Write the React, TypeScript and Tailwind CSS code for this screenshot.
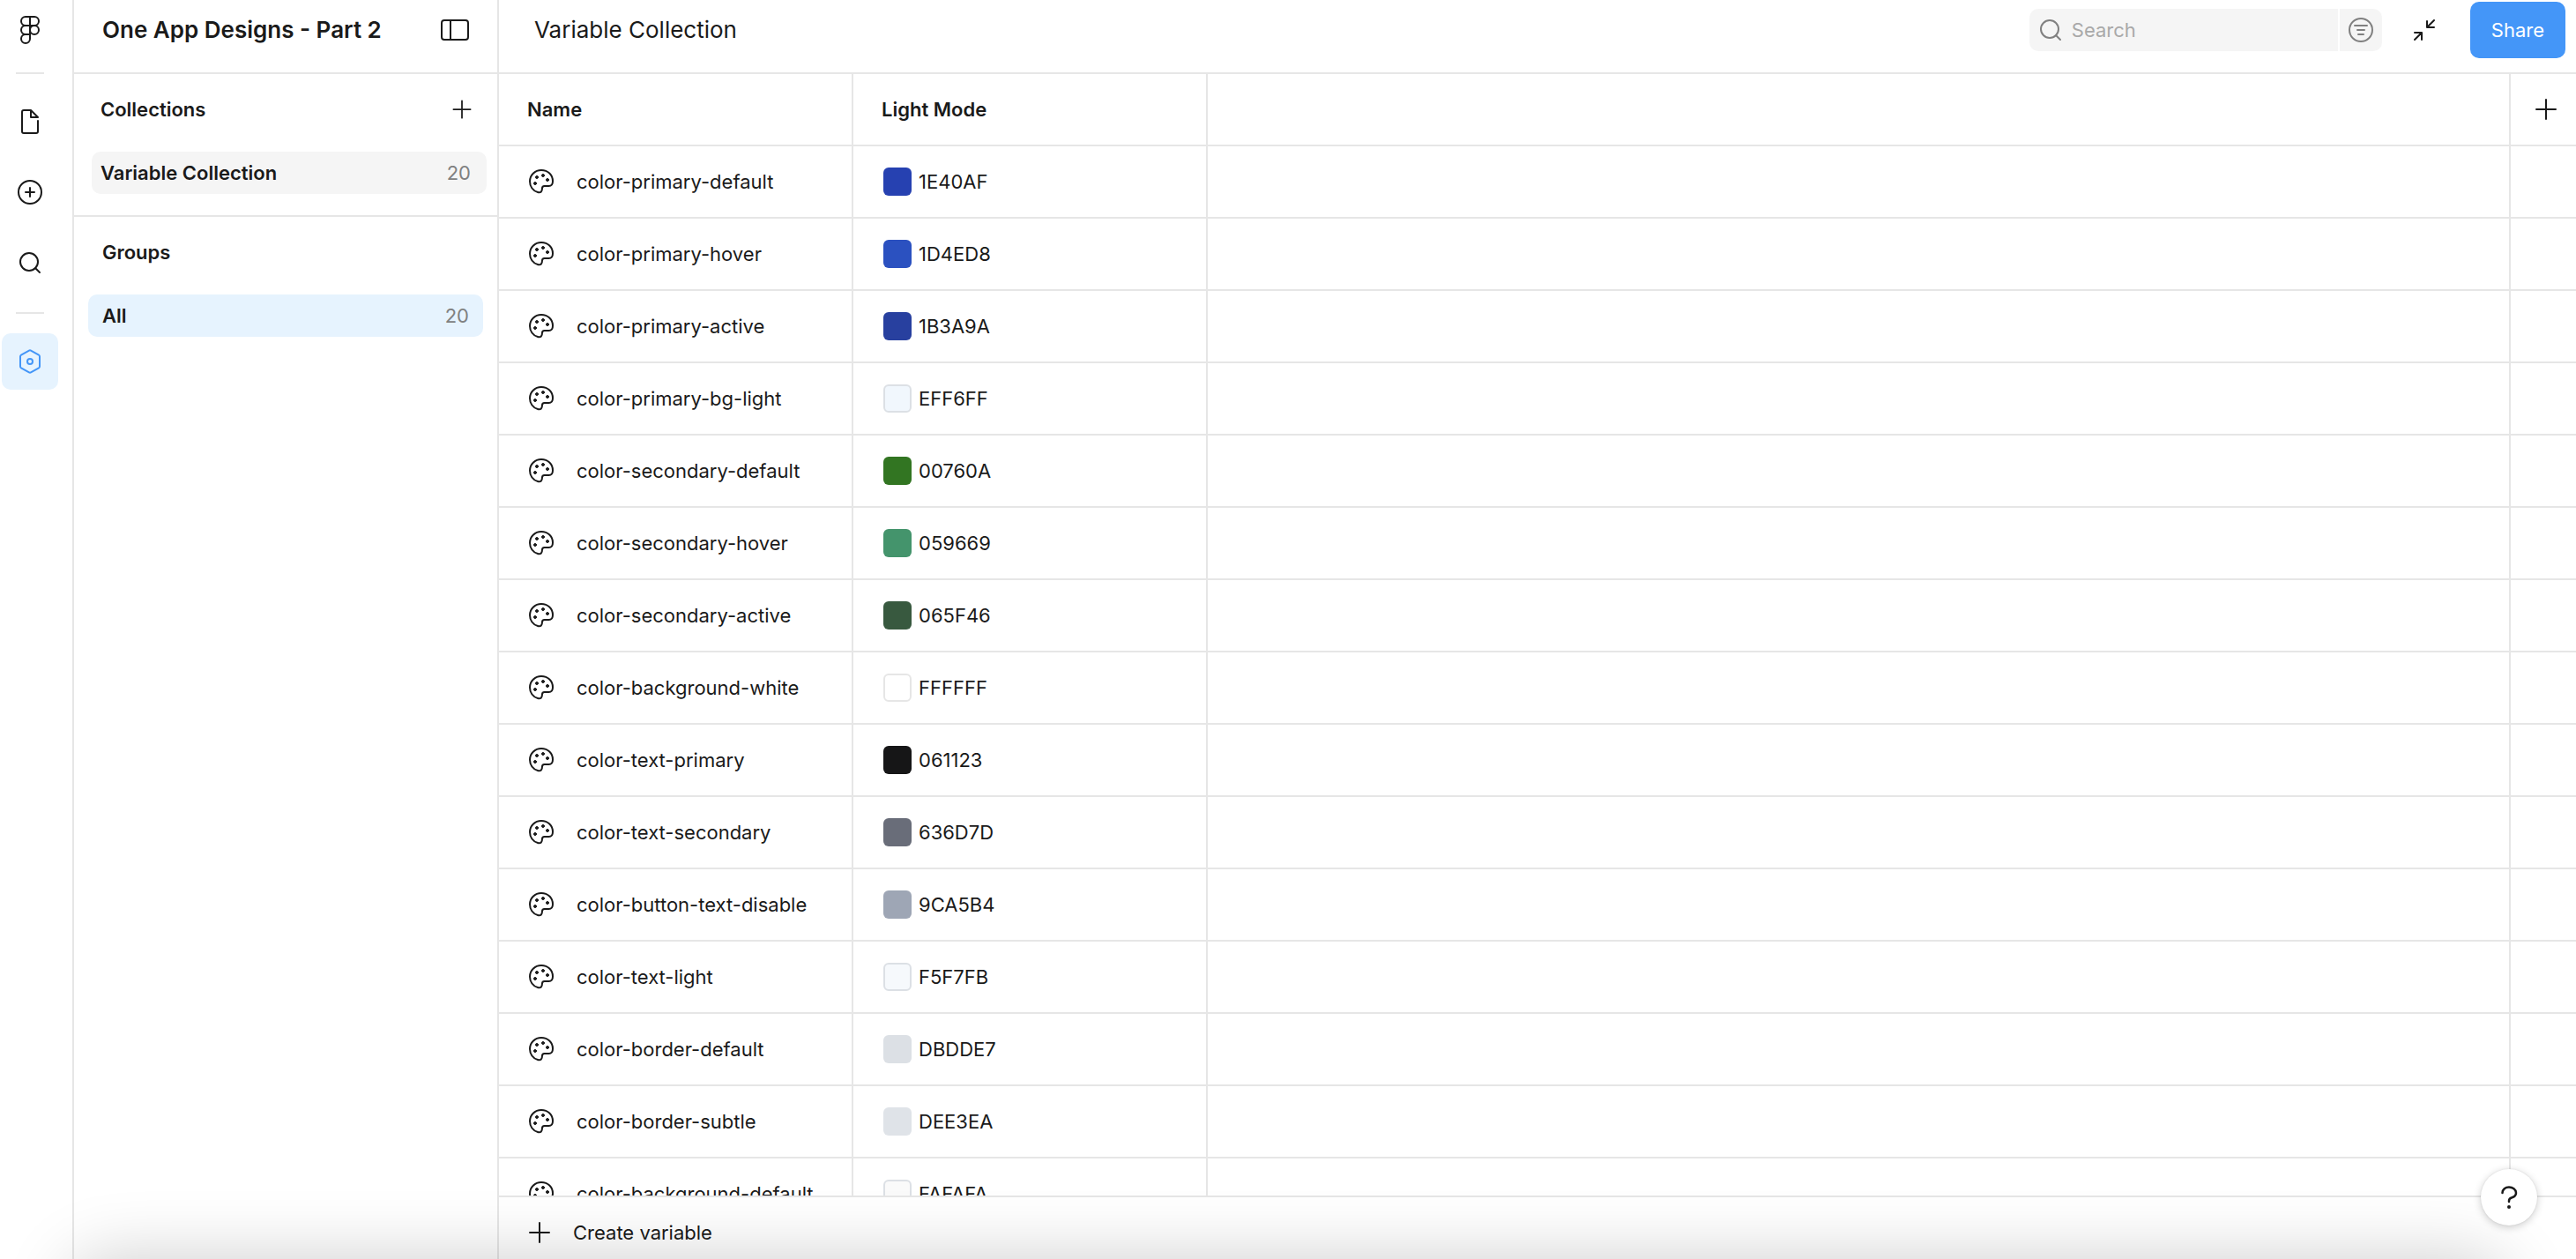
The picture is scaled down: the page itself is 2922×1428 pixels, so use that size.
import type { ReactNode } from "react";
import clsx from "clsx";

type IconProps = { className?: string };

const variables = [
  { name: "color-primary-default", hex: "1E40AF", swatch: "bg-[#2641b1]" },
  { name: "color-primary-hover", hex: "1D4ED8", swatch: "bg-[#2b51c0]" },
  { name: "color-primary-active", hex: "1B3A9A", swatch: "bg-[#28409f]" },
  { name: "color-primary-bg-light", hex: "EFF6FF", swatch: "border-2 border-[#dce0e5] bg-[#f1f7fd]" },
  { name: "color-secondary-default", hex: "00760A", swatch: "bg-[#327522]" },
  { name: "color-secondary-hover", hex: "059669", swatch: "bg-[#44946c]" },
  { name: "color-secondary-active", hex: "065F46", swatch: "bg-[#38593f]" },
  { name: "color-background-white", hex: "FFFFFF", swatch: "border-2 border-[#e6e6e6] bg-white" },
  { name: "color-text-primary", hex: "061123", swatch: "bg-[#161617]" },
  { name: "color-text-secondary", hex: "636D7D", swatch: "bg-[#696d79]" },
  { name: "color-button-text-disable", hex: "9CA5B4", swatch: "bg-[#9ea6b5]" },
  { name: "color-text-light", hex: "F5F7FB", swatch: "border-2 border-[#dce0e5] bg-[#f6f9fc]" },
  { name: "color-border-default", hex: "DBDDE7", swatch: "bg-[#dce0e5]" },
  { name: "color-border-subtle", hex: "DEE3EA", swatch: "bg-[#dfe3e8]" },
  { name: "color-background-default", hex: "FAFAFA", swatch: "border-2 border-[#dce0e5] bg-[#fafafa]" },
];

function Icon({ className = "size-8", children }: IconProps & { children: ReactNode }) {
  return (
    <svg
      viewBox="0 0 32 32"
      fill="none"
      stroke="currentColor"
      strokeWidth="2"
      strokeLinecap="round"
      strokeLinejoin="round"
      aria-hidden="true"
      className={clsx("shrink-0", className)}
    >
      {children}
    </svg>
  );
}

function FigmaIcon() {
  return (
    <Icon>
      <path d="M16 1h-5a5 5 0 0 0 0 10h5zM16 1h5a5 5 0 0 1 0 10h-5zM16 11h-5a5 5 0 0 0 0 10h5z" />
      <circle cx="21" cy="16" r="5" />
      <path d="M16 21h-5a5 5 0 1 0 5 5z" />
    </Icon>
  );
}

function FileIcon() {
  return (
    <Icon>
      <path d="M25 15v12a2 2 0 0 1-2 2H9a2 2 0 0 1-2-2V5a2 2 0 0 1 2-2h8l8 8h-8V3" />
    </Icon>
  );
}

function PlusCircleIcon() {
  return (
    <Icon>
      <circle cx="16" cy="16" r="13" />
      <path d="M16 11v10M11 16h10" />
    </Icon>
  );
}

function SearchIcon() {
  return (
    <Icon>
      <circle cx="15" cy="15" r="10" />
      <path d="m22 22 5 5" />
    </Icon>
  );
}

function VariablesIcon() {
  return (
    <Icon>
      <path d="M15 3.600a2 2 0 0 1 2 0l9 5a2 2 0 0 1 1 1.800v11.200a2 2 0 0 1-1 1.800l-9 5a2 2 0 0 1-2 0l-9-5a2 2 0 0 1-1-1.800V10.400a2 2 0 0 1 1-1.800z" />
      <circle cx="16" cy="16" r="3" />
    </Icon>
  );
}

function PanelIcon() {
  return (
    <Icon>
      <rect x="1" y="5" width="30" height="22" rx="3" />
      <path d="M11 5v22" />
    </Icon>
  );
}

function PlusIcon({ className }: IconProps) {
  return (
    <Icon className={className}>
      <path d="M16 5v22M5 16h22" />
    </Icon>
  );
}

function FilterIcon() {
  return (
    <Icon>
      <circle cx="16" cy="16" r="13" />
      <path d="M9 11h14M12 16h8M13 21h6" />
    </Icon>
  );
}

function CollapseIcon() {
  return (
    <Icon>
      <path d="M27 5l-8 8M19 6v7h8M5 27l8-8M5 19h8v8" />
    </Icon>
  );
}

function PaletteIcon() {
  return (
    <Icon>
      <path d="M12 28C6.500 26.500 3 21.500 3 15.700 3 8.600 8.700 3 16 3c7.400 0 13 5.200 13 12.500 0 3.500-1.700 5.500-4.500 5.500h-5c-1.700 0-2.500.8-2.500 2.500 0 3.500-1.500 5.500-5 4.500z" />
      <g fill="currentColor" strokeWidth="1">
        <circle cx="9" cy="18" r="1.500" />
        <circle cx="11" cy="11" r="1.500" />
        <circle cx="18" cy="9" r="1.500" />
        <circle cx="23" cy="14" r="1.500" />
      </g>
    </Icon>
  );
}

function HelpIcon() {
  return (
    <Icon>
      <path
        d="M8.500 11C8.500 7 12 4.500 16 4.500s8 2.500 8 6.500c0 3-2 4.500-4.500 5.200-2.300.6-3.500 1.800-3.500 3.800v1"
        strokeWidth="2.500"
      />
      <circle cx="16" cy="27" r="2" fill="currentColor" stroke="none" />
    </Icon>
  );
}

function RailButton({ label, active, children }: { label: string; active?: boolean; children: ReactNode }) {
  return (
    <button
      type="button"
      aria-label={label}
      className={clsx(
        "flex size-16 items-center justify-center rounded-[10px]",
        active && "bg-[#e6f3fe] text-[#4496f8]",
      )}
    >
      {children}
    </button>
  );
}

function Rail() {
  return (
    <nav className="flex w-[84px] shrink-0 flex-col items-center border-r-2 border-[#e6e6e6] pt-0.5 pr-4 pl-0.5">
      <RailButton label="Main menu">
        <FigmaIcon />
      </RailButton>
      <div className="mt-4 mb-[22px] h-0.5 w-8 bg-[#e6e6e6]" />
      <div className="flex flex-col gap-4">
        <RailButton label="File">
          <FileIcon />
        </RailButton>
        <RailButton label="Assets">
          <PlusCircleIcon />
        </RailButton>
        <RailButton label="Find">
          <SearchIcon />
        </RailButton>
      </div>
      <div className="mt-6 mb-[22px] h-0.5 w-8 bg-[#e6e6e6]" />
      <RailButton label="Variables" active>
        <VariablesIcon />
      </RailButton>
    </nav>
  );
}

function Sidebar() {
  return (
    <aside className="flex w-[482px] shrink-0 flex-col border-r-2 border-[#e6e6e6]">
      <div className="flex h-[84px] items-start justify-between border-b-2 border-[#e6e6e6] pt-0.5 pr-8 pl-8">
        <h1 className="text-[26px] leading-[64px] font-semibold">One App Designs - Part 2</h1>
        <button type="button" aria-label="Toggle sidebar" className="flex h-16 items-center">
          <PanelIcon />
        </button>
      </div>

      <section className="h-[162px] border-b-2 border-[#e6e6e6] px-2.5">
        <div className="flex h-20 items-center justify-between pr-4 pl-5">
          <h2 className="font-semibold">Collections</h2>
          <button type="button" aria-label="Create collection">
            <PlusIcon className="size-7" />
          </button>
        </div>
        <button
          type="button"
          className="mt-2 ml-2.5 flex h-12 w-[448px] items-center justify-between rounded-[10px] bg-[#f5f5f5] pr-[18px] pl-2.5"
        >
          <span className="font-semibold">Variable Collection</span>
          <span className="text-[#808080]">20</span>
        </button>
      </section>

      <section className="px-4">
        <h2 className="flex h-20 items-center pl-4 font-semibold">Groups</h2>
        <button
          type="button"
          className="mt-2 flex h-12 w-full items-center justify-between rounded-[10px] bg-[#e6f3fe] px-4"
        >
          <span className="font-semibold">All</span>
          <span className="text-[#808080]">20</span>
        </button>
      </section>
    </aside>
  );
}

function Toolbar() {
  return (
    <header className="flex h-[84px] shrink-0 items-start border-b-2 border-[#e6e6e6] pt-0.5 pr-3 pl-10">
      <h2 className="text-[26px] leading-[64px]">Variable Collection</h2>
      <div className="ml-auto flex h-16 items-center">
        <div className="flex h-12 w-[400px] gap-0.5">
          <label className="flex flex-1 items-center gap-2 rounded-l-[10px] bg-[#f5f5f5] pl-2 text-[#808080]">
            <SearchIcon />
            <input
              type="search"
              placeholder="Search"
              aria-label="Search variables"
              className="w-full min-w-0 outline-none placeholder:text-[#a9a9a9]"
            />
          </label>
          <button
            type="button"
            aria-label="Filter"
            className="flex w-12 items-center justify-center rounded-r-[10px] bg-[#f5f5f5] text-[#808080]"
          >
            <FilterIcon />
          </button>
        </div>
        <button type="button" aria-label="Collapse window" className="ml-4 flex size-16 items-center justify-center">
          <CollapseIcon />
        </button>
        <button type="button" className="ml-5 h-16 rounded-[10px] bg-[#4496f8] px-6 text-white">
          Share
        </button>
      </div>
    </header>
  );
}

function VariableTable() {
  return (
    <div className="min-h-0 flex-1 overflow-hidden">
      <table className="w-full table-fixed border-separate border-spacing-0 text-left">
        <colgroup>
          <col className="w-[402px]" />
          <col className="w-[402px]" />
          <col />
          <col className="w-[76px]" />
        </colgroup>
        <thead>
          <tr className="h-[82px] *:border-b-2 *:border-[#e6e6e6]">
            <th scope="col" className="border-r-2 pl-8 font-semibold">Name</th>
            <th scope="col" className="border-r-2 pl-8 font-semibold">Light Mode</th>
            <td />
            <td className="border-l-2 pl-6">
              <button type="button" aria-label="New mode" className="flex">
                <PlusIcon />
              </button>
            </td>
          </tr>
        </thead>
        <tbody>
          {variables.map((variable) => (
            <tr key={variable.name} className="h-[82px] *:border-b-2 *:border-[#e6e6e6]">
              <td className="border-r-2 pl-8">
                <div className="flex items-center gap-6">
                  <PaletteIcon />
                  {variable.name}
                </div>
              </td>
              <td className="border-r-2 pl-[34px]">
                <div className="flex items-center gap-2">
                  <span className={clsx("size-8 rounded-md", variable.swatch)} />
                  {variable.hex}
                </div>
              </td>
              <td />
              <td className="border-l-2" />
            </tr>
          ))}
        </tbody>
      </table>
    </div>
  );
}

export default function App() {
  return (
    <div className="relative flex h-screen overflow-hidden bg-white font-['Inter',sans-serif] text-[22px] leading-8 text-[#1a1a1a]">
      <Rail />
      <Sidebar />
      <main className="flex min-w-0 flex-1 flex-col">
        <Toolbar />
        <VariableTable />
        <button
          type="button"
          className="flex h-[72px] shrink-0 items-center gap-[22px] border-t-2 border-[#e6e6e6] pt-2.5 pl-[30px]"
        >
          <PlusIcon />
          Create variable
        </button>
      </main>

      {/* soft shade rising from the bottom edge */}
      <div className="pointer-events-none absolute inset-x-20 top-full h-40 rounded-[40px] shadow-[0_0_80px_rgba(0,0,0,0.2)]" />

      <button
        type="button"
        aria-label="Help"
        className="absolute right-11 bottom-[38px] flex size-16 items-center justify-center rounded-full bg-white shadow-[0_2px_10px_rgba(0,0,0,0.2),0_0_2px_rgba(0,0,0,0.1)]"
      >
        <HelpIcon />
      </button>
    </div>
  );
}
